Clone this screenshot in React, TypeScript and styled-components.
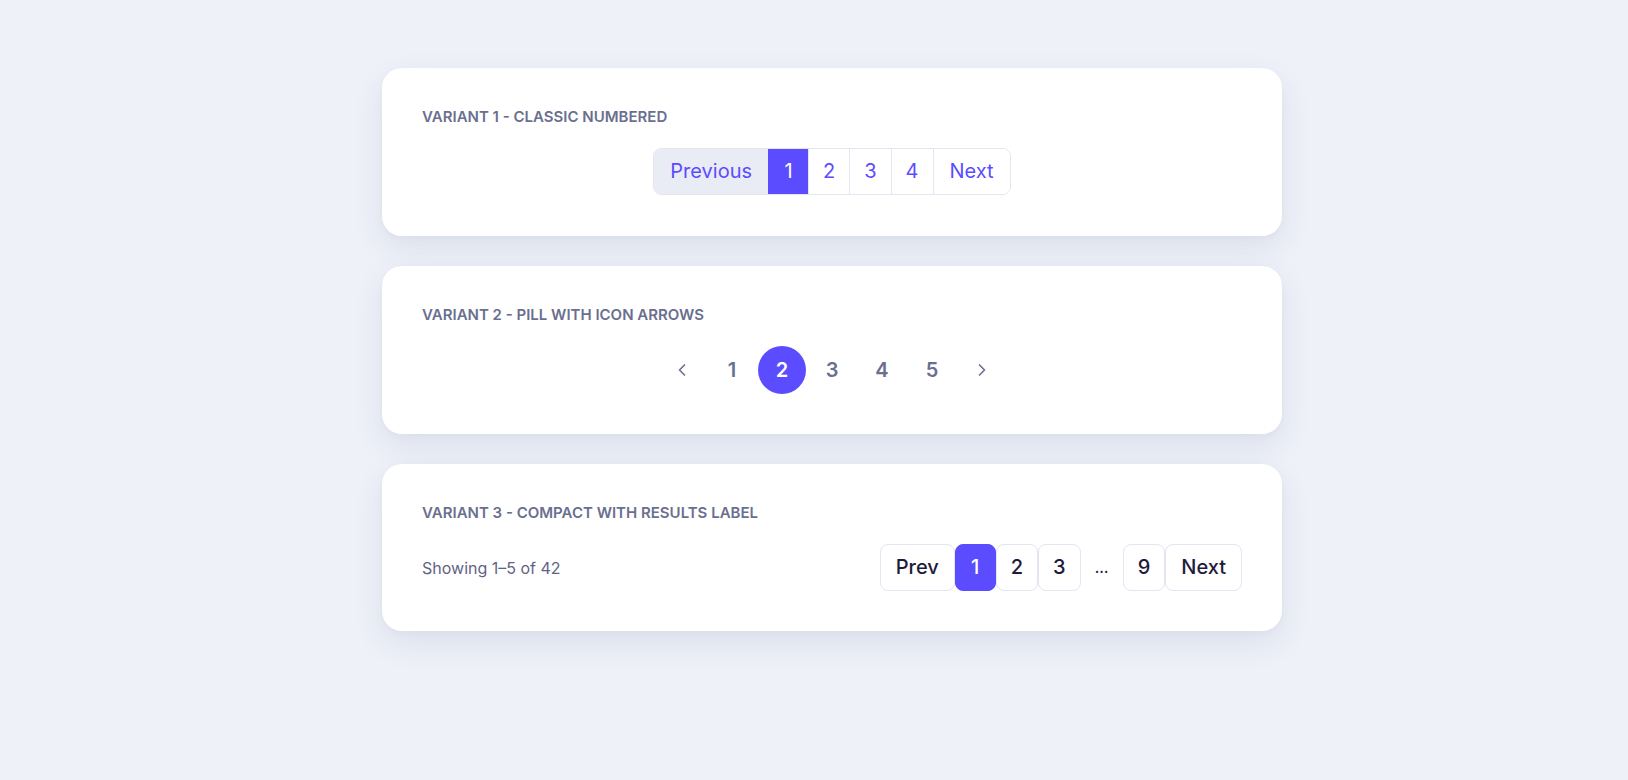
import React from "react";
import styled, { createGlobalStyle, css } from "styled-components";

const GlobalStyle = createGlobalStyle`
  * { box-sizing: border-box; }
  html, body {
    margin: 0;
    padding: 0;
    background: #eef1f8;
    font-family: Inter, "Noto Sans", "Liberation Sans", sans-serif;
  }
`;

const ACCENT = "#5b4dff";
const BORDER = "#e3e5f0";

const Page = styled.main`
  min-height: 780px;
  padding: 68px 0 40px 36px;
  display: flex;
  flex-direction: column;
  align-items: center;
  gap: 30px;
`;

const Card = styled.section<{ $tall?: boolean }>`
  width: 900px;
  background: #ffffff;
  border-radius: 20px;
  padding: 40px 40px ${(p) => (p.$tall ? "41px" : "40px")};
  box-shadow: 0 12px 32px rgba(40, 50, 110, 0.09), 0 2px 6px rgba(40, 50, 110, 0.03);
`;

const Label = styled.h2`
  margin: 0 0 22px;
  font-size: 15px;
  line-height: 18px;
  font-weight: 600;
  color: #6b6f8f;
  text-transform: uppercase;
`;

/* Variant 1: joined segments */
const Segmented = styled.nav`
  display: flex;
  justify-content: center;
`;

const SegmentGroup = styled.div`
  display: flex;
  border: 1px solid ${BORDER};
  border-radius: 8px;
  overflow: hidden;
`;

const Segment = styled.button<{ $active?: boolean; $muted?: boolean; $word?: boolean }>`
  appearance: none;
  border: 0;
  border-left: 1px solid ${BORDER};
  margin: 0;
  font-family: inherit;
  font-size: 20px;
  line-height: 25px;
  font-weight: 400;
  padding: 10px ${(p) => (p.$word ? "16px" : "14px")};
  min-width: 40px;
  background: #ffffff;
  color: ${ACCENT};
  cursor: pointer;
  &:first-child { border-left: 0; }
  ${(p) =>
    p.$muted &&
    css`
      background: #e9ecf4;
    `}
  ${(p) =>
    p.$active &&
    css`
      background: ${ACCENT};
      color: #ffffff;
      border-left-color: ${ACCENT};
    `}
`;

/* Variant 2: round pills */
const PillRow = styled.nav`
  display: flex;
  justify-content: center;
  gap: 2px;
`;

const Pill = styled.button<{ $active?: boolean }>`
  appearance: none;
  border: 0;
  padding: 0;
  width: 48px;
  height: 48px;
  border-radius: 50%;
  display: flex;
  align-items: center;
  justify-content: center;
  font-family: inherit;
  font-size: 20px;
  font-weight: 600;
  color: #6b6f8f;
  background: transparent;
  cursor: pointer;
  ${(p) =>
    p.$active &&
    css`
      background: ${ACCENT};
      color: #ffffff;
    `}
`;

/* Variant 3: compact with results label */
const CompactRow = styled.div`
  display: flex;
  align-items: center;
  justify-content: space-between;
`;

const Results = styled.span`
  font-size: 16px;
  color: #5f6385;
`;

const BoxGroup = styled.nav`
  display: flex;
  align-items: center;
`;

const Box = styled.button<{ $active?: boolean; $word?: boolean }>`
  appearance: none;
  margin: 0;
  font-family: inherit;
  font-size: 20px;
  line-height: 25px;
  font-weight: 500;
  color: #1e1c3a;
  background: #ffffff;
  border: 1px solid ${BORDER};
  border-radius: 8px;
  padding: 10px ${(p) => (p.$word ? "15px" : "14px")};
  min-width: 41px;
  cursor: pointer;
  ${(p) =>
    p.$active &&
    css`
      background: ${ACCENT};
      border-color: ${ACCENT};
      color: #ffffff;
    `}
`;

const Gap = styled.span`
  width: 42px;
  text-align: center;
  font-size: 15px;
  font-weight: 500;
  color: #1e1c3a;
  line-height: 24px;
`;

const Chevron = ({ dir }: { dir: "left" | "right" }) => (
  <svg
    width="20"
    height="20"
    viewBox="0 0 24 24"
    fill="none"
    stroke="currentColor"
    strokeWidth="2"
    strokeLinecap="round"
    strokeLinejoin="round"
  >
    <path d={dir === "left" ? "m15 18-6-6 6-6" : "m9 18 6-6-6-6"} />
  </svg>
);

export default function App() {
  return (
    <>
      <GlobalStyle />
      <Page>
        <Card $tall>
          <Label>Variant 1 - Classic Numbered</Label>
          <Segmented>
            <SegmentGroup>
              <Segment $word $muted>Previous</Segment>
              {[1, 2, 3, 4].map((n) => (
                <Segment key={n} $active={n === 1}>
                  {n}
                </Segment>
              ))}
              <Segment $word>Next</Segment>
            </SegmentGroup>
          </Segmented>
        </Card>

        <Card>
          <Label>Variant 2 - Pill with Icon Arrows</Label>
          <PillRow>
            <Pill aria-label="Previous page">
              <Chevron dir="left" />
            </Pill>
            {[1, 2, 3, 4, 5].map((n) => (
              <Pill key={n} $active={n === 2}>
                {n}
              </Pill>
            ))}
            <Pill aria-label="Next page">
              <Chevron dir="right" />
            </Pill>
          </PillRow>
        </Card>

        <Card>
          <Label>Variant 3 - Compact with Results Label</Label>
          <CompactRow>
            <Results>Showing 1–5 of 42</Results>
            <BoxGroup>
              <Box $word>Prev</Box>
              <Box $active>1</Box>
              <Box>2</Box>
              <Box>3</Box>
              <Gap>…</Gap>
              <Box>9</Box>
              <Box $word>Next</Box>
            </BoxGroup>
          </CompactRow>
        </Card>
      </Page>
    </>
  );
}
